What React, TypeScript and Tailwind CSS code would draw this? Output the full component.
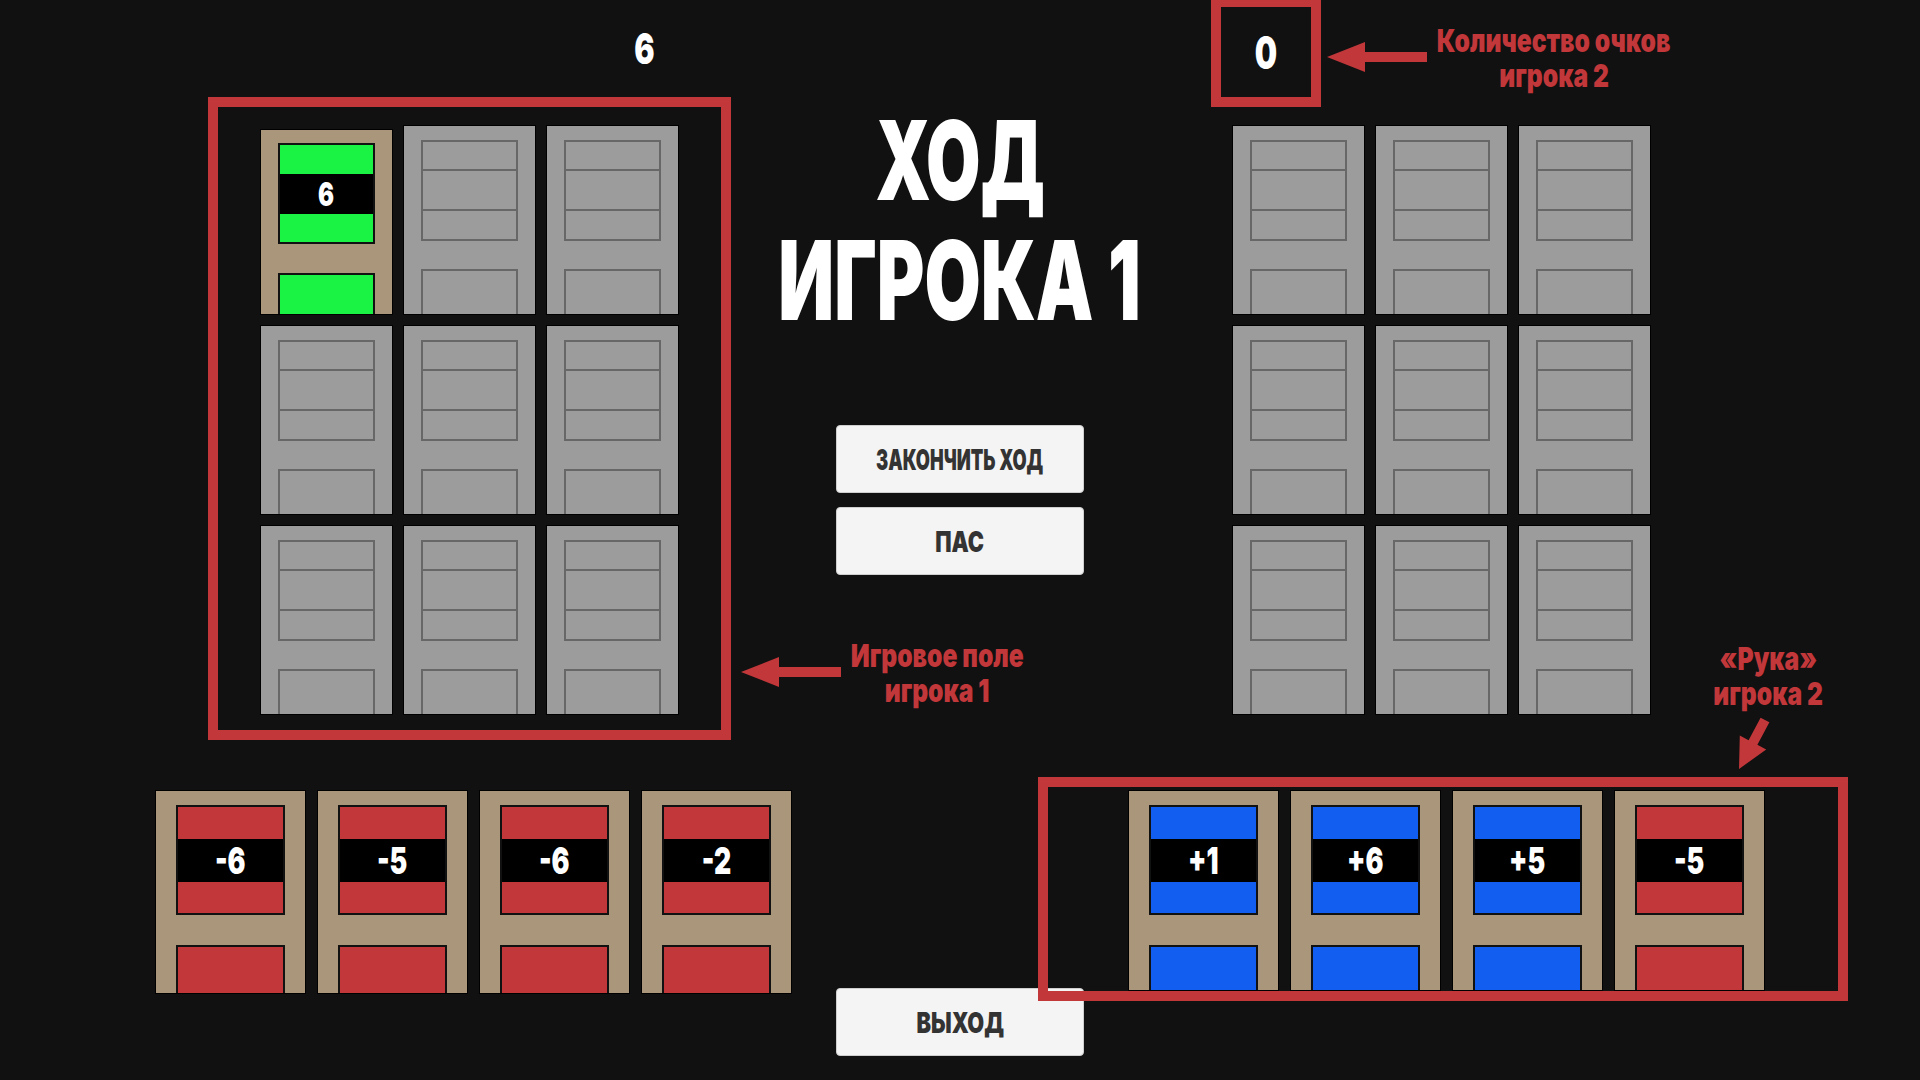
import React from "react";

const FONT = "font-['Inter','Liberation_Sans',sans-serif] font-black";

type Tone = "green" | "red" | "blue";

const TONE: Record<Tone, string> = {
  green: "bg-[#1af244]",
  red: "bg-[#c1373a]",
  blue: "bg-[#125ef0]",
};

function EmptySlot() {
  return (
    <div className="w-[133px] h-[190px] bg-[#9c9c9c] border border-black flex flex-col px-[17px] pt-[14px]">
      <div className="h-[101px] border-2 border-[#676767] flex flex-col">
        <div className="h-[29px] border-b-2 border-[#676767]" />
        <div className="h-[40px] border-b-2 border-[#676767]" />
        <div className="flex-1" />
      </div>
      <div className="mt-[28px] flex-1 border-2 border-b-0 border-[#676767]" />
    </div>
  );
}

function BoardCard({ tone, value }: { tone: Tone; value: string }) {
  return (
    <div className="w-[133px] h-[186px] mt-[4px] bg-[#a9967b] border border-black flex flex-col px-[17px] pt-[13px]">
      <div className="h-[101px] border-2 border-[#111] flex flex-col">
        <div className={`h-[29px] ${TONE[tone]}`} />
        <div className="h-[40px] bg-black flex items-center justify-center">
          <span className={`${FONT} text-white text-[33px] leading-none inline-block scale-x-[0.72]`}>
            {value}
          </span>
        </div>
        <div className={`flex-1 ${TONE[tone]}`} />
      </div>
      <div className={`mt-[29px] flex-1 border-2 border-b-0 border-[#111] ${TONE[tone]}`} />
    </div>
  );
}

function HandCard({ tone, value, short }: { tone: Tone; value: string; short?: boolean }) {
  return (
    <div
      className={`w-[151px] ${short ? "h-[201px]" : "h-[204px]"} bg-[#a9967b] border border-black flex flex-col px-[20px] pt-[14px]`}
    >
      <div className="h-[110px] border-2 border-[#111] flex flex-col">
        <div className={`h-[32px] ${TONE[tone]}`} />
        <div className="h-[43px] bg-black flex items-center justify-center">
          <span className={`${FONT} text-white text-[37px] leading-none inline-block scale-x-[0.72]`}>
            {value}
          </span>
        </div>
        <div className={`flex-1 ${TONE[tone]}`} />
      </div>
      <div className={`mt-[30px] flex-1 border-2 border-b-0 border-[#111] ${TONE[tone]}`} />
    </div>
  );
}

function Board({ first }: { first?: boolean }) {
  const cells = Array.from({ length: 9 }, (_, i) => i);
  return (
    <div className="grid grid-cols-[133px_133px_133px] auto-rows-[190px] gap-[10px]">
      {cells.map((i) =>
        first && i === 0 ? <BoardCard key={i} tone="green" value="6" /> : <EmptySlot key={i} />
      )}
    </div>
  );
}

function MenuButton({ label, narrow }: { label: string; narrow?: boolean }) {
  return (
    <button className="w-[248px] h-[68px] rounded-[4px] bg-[#f4f4f4] border border-[#cfcfcf] flex items-center justify-center">
      <span
        className={`${FONT} text-[#333] text-[29px] leading-none inline-block whitespace-nowrap ${
          narrow ? "scale-x-[0.63]" : "scale-x-[0.75]"
        }`}
      >
        {label}
      </span>
    </button>
  );
}

function LeftArrow() {
  return (
    <svg width="100" height="30" viewBox="0 0 100 30">
      <polygon points="0,15 38,0 38,10 100,10 100,20 38,20 38,30" fill="#c1373a" />
    </svg>
  );
}

function Callout({ lines, className }: { lines: string[]; className: string }) {
  return (
    <div className={`absolute flex flex-col items-center text-[#c1373a] text-[32px] leading-[35px] ${FONT} ${className}`}>
      {lines.map((l) => (
        <span key={l} className="inline-block scale-x-[0.77] whitespace-nowrap">
          {l}
        </span>
      ))}
    </div>
  );
}

export default function App() {
  const hand1: { tone: Tone; value: string }[] = [
    { tone: "red", value: "-6" },
    { tone: "red", value: "-5" },
    { tone: "red", value: "-6" },
    { tone: "red", value: "-2" },
  ];
  const hand2: { tone: Tone; value: string }[] = [
    { tone: "blue", value: "+1" },
    { tone: "blue", value: "+6" },
    { tone: "blue", value: "+5" },
    { tone: "red", value: "-5" },
  ];

  return (
    <div className="relative w-[1920px] h-[1080px] bg-[#111111] overflow-hidden">
      {/* top: boards and turn panel */}
      <div className="flex h-[777px]">
        <div className="w-[731px] pl-[208px] flex flex-col">
          <div className="h-[97px] flex items-center">
            <div className="ml-[417px] w-[40px] flex justify-center">
              <span className={`${FONT} text-white text-[43px] leading-none inline-block scale-x-[0.7]`}>6</span>
            </div>
          </div>
          <div className="w-[523px] h-[643px] border-[10px] border-[#c1373a] pl-[42px] pt-[18px]">
            <Board first />
          </div>
        </div>

        <div className="w-[458px] flex flex-col items-center">
          <div className={`mt-[100px] flex flex-col items-center text-white text-[110px] leading-[120px] ${FONT}`}>
            <span className="inline-block scale-x-[0.64]">ХОД</span>
            <span className="inline-block scale-x-[0.66] whitespace-nowrap">ИГРОКА 1</span>
          </div>
          <div className="mt-[85px] flex flex-col gap-[14px]">
            <MenuButton label="ЗАКОНЧИТЬ ХОД" narrow />
            <MenuButton label="ПАС" />
          </div>
        </div>

        <div className="flex flex-col">
          <div className="ml-[22px] -mt-[3px] w-[110px] h-[110px] border-[10px] border-[#c1373a] flex items-center justify-center">
            <span className={`${FONT} text-white text-[45px] leading-none inline-block scale-x-[0.7]`}>0</span>
          </div>
          <div className="ml-[43px] mt-[18px]">
            <Board />
          </div>
        </div>
      </div>

      {/* bottom: hands and exit */}
      <div className="flex">
        <div className="ml-[155px] mt-[13px] flex gap-[11px]">
          {hand1.map((c, i) => (
            <HandCard key={i} tone={c.tone} value={c.value} />
          ))}
        </div>
        <div className="w-[246px] shrink-0">
          <div className="ml-[44px] mt-[211px]">
            <MenuButton label="ВЫХОД" />
          </div>
        </div>
        <div className="relative z-10 w-[810px] h-[224px] border-[10px] border-[#c1373a] pl-[80px] pt-[3px]">
          <div className="flex gap-[11px]">
            {hand2.map((c, i) => (
              <HandCard key={i} tone={c.tone} value={c.value} short />
            ))}
          </div>
        </div>
      </div>

      {/* annotations */}
      <div className="absolute left-[1327px] top-[42px]">
        <LeftArrow />
      </div>
      <Callout lines={["Количество очков", "игрока 2"]} className="left-[1354px] top-[23px] w-[400px]" />

      <div className="absolute left-[741px] top-[657px]">
        <LeftArrow />
      </div>
      <Callout lines={["Игровое поле", "игрока 1"]} className="left-[737px] top-[638px] w-[400px]" />

      <Callout lines={["«Рука»", "игрока 2"]} className="left-[1668px] top-[641px] w-[200px]" />
      <svg className="absolute left-[1725px] top-[712px]" width="50" height="62" viewBox="0 0 50 62">
        <polygon
          points="35.6,5.7 44.4,10.3 32.4,32.8 41.2,37.5 14,57 14.8,23.5 23.6,28.2"
          fill="#c1373a"
        />
      </svg>
    </div>
  );
}
